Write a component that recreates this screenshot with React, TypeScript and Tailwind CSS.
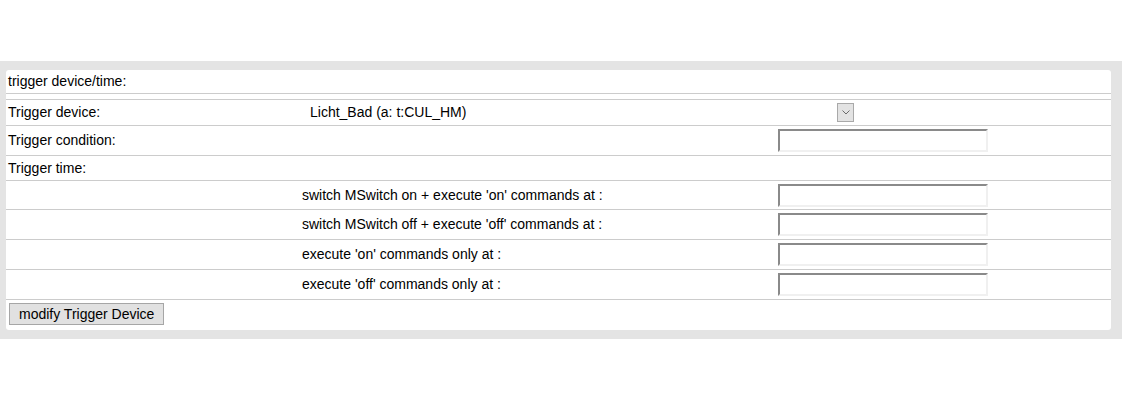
export default function App() {
  const timeRows = [
    "switch MSwitch on + execute 'on' commands at :",
    "switch MSwitch off + execute 'off' commands at :",
    "execute 'on' commands only at :",
    "execute 'off' commands only at :",
  ];

  return (
    <div className="min-h-[400px] bg-white pt-[61px] text-[14px] text-black" style={{ fontFamily: '"Liberation Sans", Arial, sans-serif' }}>
      <div className="bg-[#e4e4e4] pl-[6px] pr-[11px] py-[9px]">
        <div className="bg-white rounded-[3px] flex flex-col">
          <div className="h-[24px] border-b border-[#cccccc] flex items-center px-[2px]">
            trigger device/time:
          </div>
          <div className="h-[6px] border-b border-[#cccccc]" />

          <div className="h-[26px] border-b border-[#cccccc] grid grid-cols-[294px_1fr] items-center">
            <div className="px-[2px]">Trigger device:</div>
            <div className="pl-[2px]">
              <div className="w-[552px] h-[19px] flex items-center justify-between">
                <span className="pl-[8px]">Licht_Bad (a: t:CUL_HM)</span>
                <span className="w-[17px] h-[19px] border border-[#a9a9a9] bg-[#e3e3e3] flex items-center justify-center">
                  <svg width="8" height="5" viewBox="0 0 8 5" fill="none">
                    <path d="M0.5 0.5 L4 4 L7.5 0.5" stroke="#6b6b6b" strokeWidth="1" />
                  </svg>
                </span>
              </div>
            </div>
          </div>

          <div className="h-[30px] border-b border-[#cccccc] grid grid-cols-[294px_476px_1fr] items-center">
            <div className="px-[2px]">Trigger condition:</div>
            <div />
            <div className="px-[2px]">
              <TimeInput />
            </div>
          </div>

          <div className="h-[25px] border-b border-[#cccccc] flex items-center px-[2px]">
            Trigger time:
          </div>

          {timeRows.map((label, i) => (
            <div
              key={label}
              className={`${i === 0 ? 'h-[29px]' : 'h-[30px]'} border-b border-[#cccccc] grid grid-cols-[294px_476px_1fr] items-center`}
            >
              <div />
              <div className="px-[2px]">{label}</div>
              <div className="px-[2px]">
                <TimeInput />
              </div>
            </div>
          ))}

          <div className="h-[30px] flex items-start pt-[3px] pl-[3px]">
            <button className="h-[22px] px-[9px] border border-[#a6a6a6] bg-[#e1e1e1] text-[14px] leading-none text-black">
              modify Trigger Device
            </button>
          </div>
        </div>
      </div>
    </div>
  );
}

function TimeInput() {
  return (
    <input
      type="text"
      className="block w-[210px] h-[23px] bg-white border-2 border-t-[#8a8a8a] border-l-[#8a8a8a] border-b-[#f0f0f0] border-r-[#f0f0f0] outline-none"
    />
  );
}
